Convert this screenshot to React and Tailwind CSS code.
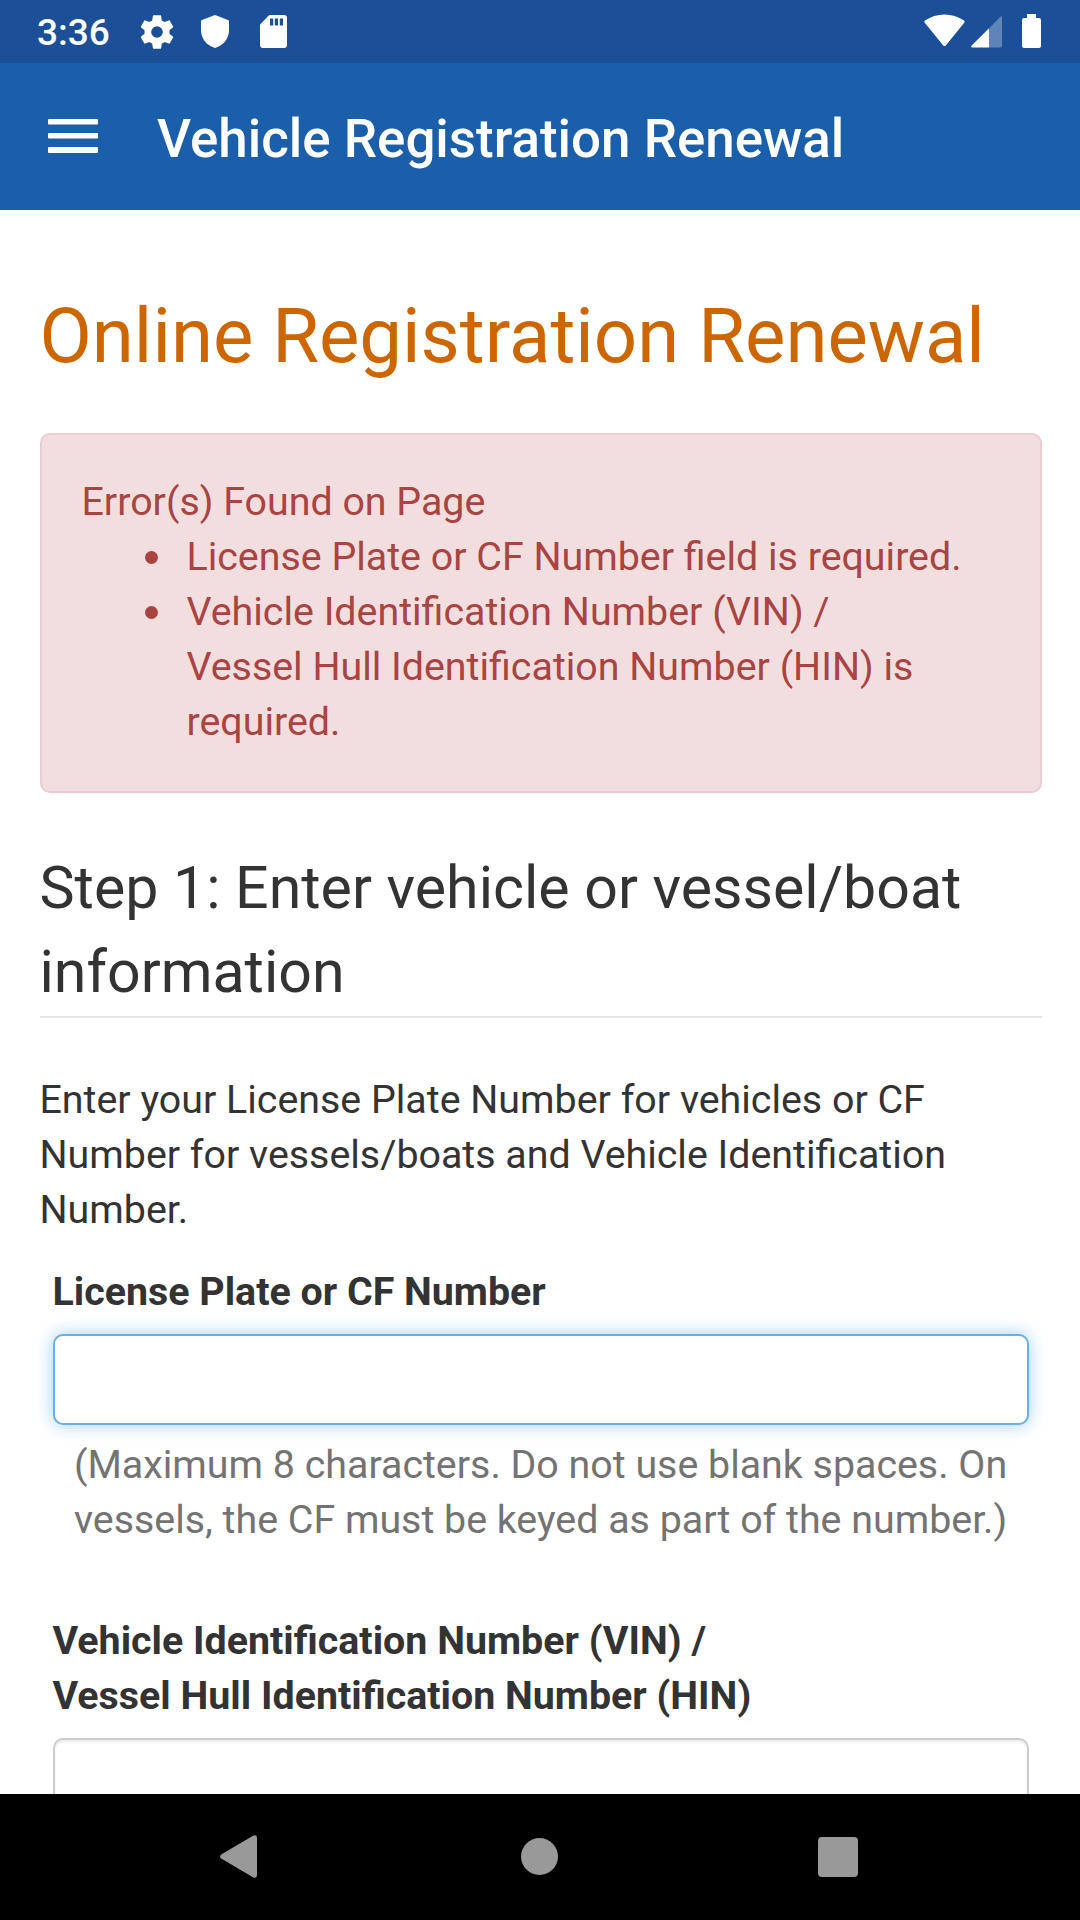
function StatusBar() {
  return (
    <div className="flex h-[63px] items-center justify-between bg-[#1b5099] pl-[37px] pr-[39px]">
      <div className="flex items-center">
        <span className="w-[100px] pt-[3px] text-[37px] font-medium leading-[60px]">3:36</span>
        <svg className="h-[40px] w-[40px]" viewBox="0 0 24 24" fill="#fff">
          <path d="M19.43 12.98c.04-.32.07-.64.07-.98s-.03-.66-.07-.98l2.11-1.65c.19-.15.24-.42.12-.64l-2-3.46c-.12-.22-.39-.3-.61-.22l-2.49 1c-.52-.4-1.08-.73-1.69-.98l-.38-2.65C14.46 2.18 14.25 2 14 2h-4c-.25 0-.46.18-.49.42l-.38 2.65c-.61.25-1.17.59-1.69.98l-2.49-1c-.23-.09-.49 0-.61.22l-2 3.46c-.13.22-.07.49.12.64l2.11 1.65c-.04.32-.07.65-.07.98s.03.66.07.98l-2.11 1.65c-.19.15-.24.42-.12.64l2 3.46c.12.22.39.3.61.22l2.49-1c.52.4 1.08.73 1.69.98l.38 2.65c.03.24.24.42.49.42h4c.25 0 .46-.18.49-.42l.38-2.65c.61-.25 1.17-.59 1.69-.98l2.49 1c.23.09.49 0 .61-.22l2-3.46c.12-.22.07-.49-.12-.64l-2.11-1.65zM12 15.500a3.500 3.500 0 1 1 0-7 3.500 3.500 0 0 1 0 7z" />
        </svg>
        <svg className="ml-[24px] h-[33px] w-[28px]" viewBox="0 0 28 33" fill="#fff">
          <path d="M14 0 27 5q1 .4 1 1.500V15c0 8.500-5.500 15.500-14 18C5.500 30.500 0 23.500 0 15V6.500Q0 5.400 1 5Z" />
        </svg>
        <svg className="ml-[31px] h-[33px] w-[27px]" viewBox="0 0 27 33">
          <path fill="#fff" d="M10 0h14q3 0 3 3v27q0 3-3 3H3q-3 0-3-3V10.500Q0 9.500 .8 8.700L8.500.8Q9.200 0 10 0Z" />
          <path fill="#1b5099" d="M10 3.500h3.200v7H10zM14.800 3.500H18v7h-3.200zM19.800 3.500H23v7h-3.200z" />
        </svg>
      </div>
      <div className="flex items-center pb-[1px]">
        <svg className="h-[34px] w-[41px]" viewBox="0 0 41 34" fill="#fff">
          <path d="M.8 8.700Q-.2 7.500 1 6.600C12.500-1.700 28.500-1.700 40 6.600q1.200.9.200 2.100L22 31.200q-1.500 1.700-3 0Z" />
        </svg>
        <svg className="ml-[6px] mt-[1px] h-[32px] w-[31px]" viewBox="0 0 31 32" fill="#fff">
          <path fillOpacity=".3" d="M18 12.500 29.300.7Q31-.5 31 1.500V29.500q0 2-2 2H18Z" />
          <path d="M18 12.200v19.300H1.500q-2.300 0-.8-2Z" />
        </svg>
        <svg className="ml-[20px] h-[34px] w-[19px]" viewBox="0 0 19 34" fill="#fff">
          <path d="M5 0h9v4h3q2 0 2 2v26q0 2-2 2H2q-2 0-2-2V6q0-2 2-2h3z" />
        </svg>
      </div>
    </div>
  );
}

function ErrorItem({ children }) {
  return (
    <li className="flex">
      <span className="mr-[29px] mt-[22px] h-[13px] w-[13px] shrink-0 rounded-full bg-[#a94442]" />
      <span>{children}</span>
    </li>
  );
}

export default function App() {
  return (
    <div className="flex h-[1920px] w-[1080px] flex-col overflow-hidden bg-white font-['Roboto',sans-serif] text-[#333]">
      <header className="shrink-0 text-white">
        <StatusBar />
        <div className="flex h-[147px] items-center bg-[#1b5faa] pl-[48px]">
          <svg className="mb-[1px] h-[34px] w-[50px]" viewBox="0 0 50 34" fill="#fff">
            <rect width="50" height="5.500" rx="1" />
            <rect y="14" width="50" height="5.500" rx="1" />
            <rect y="28" width="50" height="6" rx="1" />
          </svg>
          <span className="ml-[59px] pt-[6px] text-[52.900px] font-medium">Vehicle Registration Renewal</span>
        </div>
      </header>
      <main className="min-h-0 flex-1 overflow-hidden pl-[39.500px] pr-[38px]">
        <h1 className="mt-[75.500px] h-[99.500px] text-[76.100px] leading-[100px] text-[#cc6600]">Online Registration Renewal</h1>
        <section className="mt-[48px] h-[360px] rounded-[10px] border-[2.600px] border-[#ebccd1] bg-[#f2dede] pl-[40px] pt-[38px] text-[39.375px] leading-[55px] text-[#a94442]">
          <p className="pt-[1px]">Error(s) Found on Page</p>
          <ul className="pl-[63px]">
            <ErrorItem>License Plate or CF Number field is required.</ErrorItem>
            <ErrorItem>Vehicle Identification Number (VIN) /<br />Vessel Hull Identification Number (HIN) is<br />required.</ErrorItem>
          </ul>
        </section>
        <h2 className="mt-[53px] border-b-[2.600px] border-[#e5e5e5] pb-[2px] text-[59.060px] leading-[84px]">Step 1: Enter vehicle or vessel/boat<br />information</h2>
        <p className="mt-[54px] h-[165px] text-[39.375px] leading-[55px]">Enter your License Plate Number for vehicles or CF<br />Number for vessels/boats and Vehicle Identification<br />Number.</p>
        <form className="mt-[27px] pl-[13px] pr-[13px] text-[39.375px] leading-[55px]">
          <label className="block h-[55px] font-bold" htmlFor="plate">License Plate or CF Number</label>
          <input id="plate" className="mt-[14.500px] block h-[91.500px] w-full rounded-[10px] border-[2.600px] border-[#66afe9] bg-white shadow-[0_0_17px_rgba(102,175,233,0.6)] outline-none" />
          <p className="mt-[12px] h-[110px] whitespace-nowrap pl-[21.500px] text-[#737373]">(Maximum 8 characters. Do not use blank spaces. On<br />vessels, the CF must be keyed as part of the number.)</p>
          <label className="mt-[66px] block h-[110px] font-bold" htmlFor="vin">Vehicle Identification Number (VIN) /<br />Vessel Hull Identification Number (HIN)</label>
          <input id="vin" className="mt-[15px] block h-[92px] w-full rounded-[10px] border-[2.600px] border-[#ccc] bg-white shadow-[inset_0_2.600px_2.600px_rgba(0,0,0,0.075)] outline-none" />
        </form>
      </main>
      <nav className="flex h-[126px] shrink-0 items-center bg-black pb-[1px] pl-[220px]">
        <svg className="h-[43px] w-[37px]" viewBox="0 0 37 43" fill="#999">
          <path d="M1.200 19.500 33 .8Q37-1 37 3v37q0 4-4 2.200L1.200 23.500q-2.400-2 0-4Z" />
        </svg>
        <span className="ml-[264px] h-[37px] w-[37px] rounded-full bg-[#999]" />
        <span className="ml-[260px] h-[40px] w-[40px] rounded-[4px] bg-[#999]" />
      </nav>
    </div>
  );
}
